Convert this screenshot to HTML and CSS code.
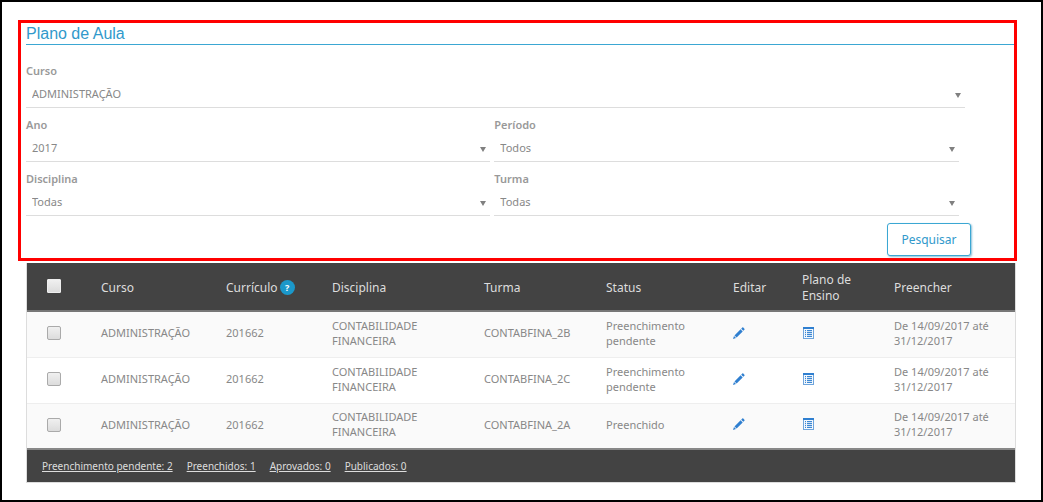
FILE: index.html
```html
<!DOCTYPE html>
<html lang="pt-BR">
<head>
<meta charset="utf-8">
<meta name="viewport" content="width=device-width, initial-scale=1">
<title>Plano de Aula</title>
<link rel="stylesheet" href="styles.css">
</head>
<body>
<svg class="sprite" aria-hidden="true">
  <symbol id="pencil" viewBox="0 0 12 12">
    <path fill="#2f7fd0" d="M0 12l1-3 2 2zM1.500 8.400L7.600 2.300l2.100 2.100L3.600 10.500zM8.200 1.700L9.300.6q.5-.5 1 0l1.100 1.100q.5.500 0 1l-1.100 1.100z"/>
  </symbol>
  <symbol id="list" viewBox="0 0 11 12">
    <path fill="#6fa5dc" d="M0 0h11v12H0z"/>
    <path fill="#2f7fd0" d="M0 0h11v2H0z"/>
    <path fill="#f4f9fe" d="M1 2h9v9H1z"/>
    <path fill="#3d88d3" d="M2 3h1v1H2zM4 3h5v1H4zM2 5h1v1H2zM4 5h5v1H4zM2 7h1v1H2zM4 7h5v1H4zM2 9h1v1H2zM4 9h5v1H4z"/>
    <path fill="#cfe1f4" d="M2 4h1v1H2zM4 4h5v1H4zM2 6h1v1H2zM4 6h5v1H4zM2 8h1v1H2zM4 8h5v1H4z"/>
  </symbol>
</svg>
<main class="page">
  <form class="filters">
    <h1 class="title">Plano de Aula</h1>
    <div class="fields">
      <div class="row">
        <div class="field field-wide">
          <label for="curso">Curso</label>
          <div class="control"><select id="curso"><option>ADMINISTRAÇÃO</option></select></div>
        </div>
      </div>
      <div class="row">
        <div class="field">
          <label for="ano">Ano</label>
          <div class="control"><select id="ano"><option>2017</option></select></div>
        </div>
        <div class="field">
          <label for="periodo">Período</label>
          <div class="control"><select id="periodo"><option>Todos</option></select></div>
        </div>
      </div>
      <div class="row">
        <div class="field">
          <label for="disciplina">Disciplina</label>
          <div class="control"><select id="disciplina"><option>Todas</option></select></div>
        </div>
        <div class="field">
          <label for="turma">Turma</label>
          <div class="control"><select id="turma"><option>Todas</option></select></div>
        </div>
      </div>
    </div>
    <div class="actions"><button class="search" type="button">Pesquisar</button></div>
  </form>

  <section class="results">
    <table class="grid">
      <colgroup>
        <col class="c-check"><col class="c-curso"><col class="c-curriculo"><col class="c-disciplina"><col class="c-turma"><col class="c-status"><col class="c-editar"><col class="c-plano"><col class="c-preencher">
      </colgroup>
      <thead>
        <tr>
          <th class="pick"><input class="check check-all" type="checkbox" aria-label="Selecionar todos"></th>
          <th>Curso</th>
          <th><span class="with-help">Currículo <button class="help" type="button">?</button></span></th>
          <th>Disciplina</th>
          <th>Turma</th>
          <th>Status</th>
          <th>Editar</th>
          <th>Plano de Ensino</th>
          <th>Preencher</th>
        </tr>
      </thead>
      <tbody>
        <tr>
          <td class="pick"><input class="check" type="checkbox" aria-label="Selecionar CONTABFINA_2B"></td>
          <td>ADMINISTRAÇÃO</td><td>201662</td><td>CONTABILIDADE FINANCEIRA</td><td>CONTABFINA_2B</td><td>Preenchimento pendente</td>
          <td><a class="icon-link" href="#" aria-label="Editar"><svg class="icon-pencil"><use href="#pencil"/></svg></a></td>
          <td><a class="icon-link" href="#" aria-label="Plano de Ensino"><svg class="icon-list"><use href="#list"/></svg></a></td>
          <td>De 14/09/2017 até 31/12/2017</td>
        </tr>
        <tr>
          <td class="pick"><input class="check" type="checkbox" aria-label="Selecionar CONTABFINA_2C"></td>
          <td>ADMINISTRAÇÃO</td><td>201662</td><td>CONTABILIDADE FINANCEIRA</td><td>CONTABFINA_2C</td><td>Preenchimento pendente</td>
          <td><a class="icon-link" href="#" aria-label="Editar"><svg class="icon-pencil"><use href="#pencil"/></svg></a></td>
          <td><a class="icon-link" href="#" aria-label="Plano de Ensino"><svg class="icon-list"><use href="#list"/></svg></a></td>
          <td>De 14/09/2017 até 31/12/2017</td>
        </tr>
        <tr>
          <td class="pick"><input class="check" type="checkbox" aria-label="Selecionar CONTABFINA_2A"></td>
          <td>ADMINISTRAÇÃO</td><td>201662</td><td>CONTABILIDADE FINANCEIRA</td><td>CONTABFINA_2A</td><td>Preenchido</td>
          <td><a class="icon-link" href="#" aria-label="Editar"><svg class="icon-pencil"><use href="#pencil"/></svg></a></td>
          <td><a class="icon-link" href="#" aria-label="Plano de Ensino"><svg class="icon-list"><use href="#list"/></svg></a></td>
          <td>De 14/09/2017 até 31/12/2017</td>
        </tr>
      </tbody>
    </table>
    <nav class="summary">
      <a href="#">Preenchimento pendente: 2</a>
      <a href="#">Preenchidos: 1</a>
      <a href="#">Aprovados: 0</a>
      <a href="#">Publicados: 0</a>
    </nav>
  </section>
</main>
</body>
</html>
```

FILE: styles.css
```css
* { box-sizing: border-box; }

body {
  margin: 0;
  font-family: "Noto Sans", sans-serif;
  font-size: 11px;
  line-height: 15px;
  color: #888;
  background: #fff;
}

.sprite { display: none; }

.page {
  min-height: 100vh;
  border: 2px solid #000;
  padding: 18px 24px 17px 16px;
}

.filters {
  border: 3px solid #f00;
  padding-left: 5px;
  padding-bottom: 2px;
}

.title {
  margin: 0;
  border-bottom: 1px solid #3ba7d3;
  font-family: "Liberation Sans", Arial, sans-serif;
  font-size: 16px;
  font-weight: 400;
  line-height: 21px;
  color: #3199cb;
}

.fields { padding-top: 18px; }

.row {
  display: flex;
  gap: 4px;
}

.field {
  width: 47%;
  height: 54px;
}

.field-wide { width: 95%; }

.field label {
  display: block;
  font-weight: 600;
  line-height: 16px;
  color: #999;
}

.control {
  position: relative;
  border-bottom: 1px solid #ddd;
}

.control::after {
  content: "";
  position: absolute;
  right: 4px;
  top: 14px;
  border: 3px solid transparent;
  border-top: 5px solid #808080;
  border-bottom: 0;
  pointer-events: none;
}

.control select {
  display: block;
  width: 100%;
  height: 28px;
  margin: 0;
  border: 0;
  padding: 0 16px 0 6px;
  appearance: none;
  font: inherit;
  color: #888;
  background: transparent;
}

.actions {
  display: flex;
  justify-content: flex-end;
  padding-right: 43px;
  margin-top: -2px;
}

.search {
  width: 84px;
  height: 33px;
  border: 1px solid #3ba7d3;
  border-radius: 3px;
  padding: 0;
  font: inherit;
  font-size: 12px;
  color: #3199cb;
  background: #fff;
  box-shadow: 1px 1px 2px #8abfd8;
}

.results {
  margin: 2px 1px 0 8px;
  border: 1px solid #ddd;
  border-top: 0;
}

.grid {
  width: 100%;
  table-layout: fixed;
  border-collapse: collapse;
}

.c-check { width: 64px; }
.c-curso { width: 125px; }
.c-curriculo { width: 106px; }
.c-disciplina { width: 152px; }
.c-turma { width: 122px; }
.c-status { width: 127px; }
.c-editar { width: 69px; }
.c-plano { width: 92px; }
.c-preencher { width: 131px; }

.grid th {
  height: 48px;
  padding: 2px 20px 0 10px;
  border-bottom: 2px solid #777;
  font-size: 12px;
  font-weight: 400;
  line-height: 16px;
  text-align: left;
  color: #ddd;
  background: #434343;
}

.grid td {
  height: 46px;
  padding: 0 10px 3px;
  border-bottom: 1px solid #eee;
}

.grid tbody tr:nth-child(odd) { background: #fafafa; }
.grid tbody tr:last-child td { border-bottom: 2px solid #888; }

.grid .pick { padding: 0 0 2px 20px; }

.check {
  display: block;
  width: 14px;
  height: 14px;
  margin: 0;
  border: 1px solid #aaa;
  border-radius: 2px;
  appearance: none;
  background: linear-gradient(#f0f0f0, #dcdcdc);
}

.check-all {
  border-color: #eee;
  border-radius: 1px;
}

.with-help {
  display: flex;
  align-items: center;
  gap: 2px;
  white-space: nowrap;
}

.help {
  flex: none;
  width: 15px;
  height: 15px;
  border: 0;
  border-radius: 50%;
  padding: 0;
  font: inherit;
  font-size: 9px;
  font-weight: 700;
  line-height: 15px;
  color: #fff;
  background: #1b98ca;
}

.icon-link { display: block; }
.icon-link svg { display: block; }
.icon-pencil { width: 12px; height: 12px; }
.icon-list {
  width: 11px;
  height: 12px;
  margin-left: 1px;
}

.summary {
  display: flex;
  flex-wrap: wrap;
  gap: 14px;
  padding: 9px 15px 8px;
  font-size: 10px;
  background: #434343;
}

.summary a { color: #ddd; }
```
